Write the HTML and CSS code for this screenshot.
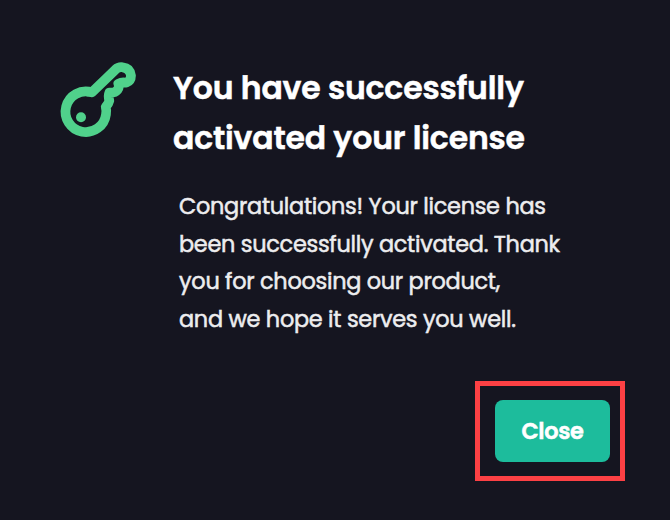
FILE: index.html
```html
<!DOCTYPE html>
<html lang="en">
<head>
<meta charset="utf-8">
<title>License activated</title>
<link rel="stylesheet" href="styles.css">
</head>
<body>
<main class="dialog">
  <svg class="key" viewBox="0 0 300 300" aria-hidden="true">
    <path d="M126 127A61 61 0 1 0 168 193Q170 180 167 171Q176 161 178 152Q174 137 178 128Q195 129 203 119Q209 110 205 101Q216 95 229 98Q243 92 243 77Q240 54 218 52Q206 50 196 59L126 127Q118 125 108 126"/>
    <circle cx="93" cy="202" r="15"/>
  </svg>
  <div class="content">
    <h1 class="title"><span class="line">You have successfully</span> <span class="line">activated your license</span></h1>
    <p class="message"><span class="line">Congratulations! Your license has</span> <span class="line">been successfully activated. Thank</span> <span class="line">you for choosing our product,</span> <span class="line">and we hope it serves you well.</span></p>
  </div>
  <div class="actions">
    <div class="highlight"><button class="close" type="button">Close</button></div>
  </div>
</main>
</body>
</html>
```
FILE: styles.css
```css
* { box-sizing: border-box; }
body {
  margin: 0;
  background: #151520;
  color: #fff;
  font-family: Poppins, Inter, "Open Sans", sans-serif;
}
.dialog {
  display: grid;
  grid-template-columns: 123px 1fr;
  grid-template-rows: 331px 100px;
  width: 670px;
  height: 520px;
  padding: 50px 45px 39px 50px;
}
.key {
  width: 100px;
  height: 100px;
  fill: none;
  stroke: #50d18b;
  stroke-width: 29;
  stroke-linejoin: round;
}
.key circle { fill: #50d18b; stroke: none; }
.content { padding-top: 13px; }
.line { display: block; width: max-content; }
.title {
  margin: 0;
  font-size: 31.5px;
  font-weight: 600;
  line-height: 50px;
  letter-spacing: -0.17px;
  -webkit-text-stroke: 0.5px #fff;
}
.message {
  margin: 25px 0 0 6px;
  color: #ededef;
  font-size: 22.4px;
  font-weight: 400;
  line-height: 37.5px;
  letter-spacing: -0.28px;
  -webkit-text-stroke: 0.5px #ededef;
}
.actions {
  grid-column: 1 / -1;
  display: flex;
  justify-content: flex-end;
}
.highlight {
  width: 150px;
  height: 100px;
  padding: 14px 10px 14px 15px;
  border: 5px solid #fc4044;
}
.close {
  display: block;
  width: 115px;
  height: 62px;
  padding: 0;
  border: 0;
  border-radius: 8px;
  background: #1dbc9c;
  color: #fff;
  font: inherit;
  font-size: 22.4px;
  font-weight: 600;
  letter-spacing: -0.3px;
  -webkit-text-stroke: 0.5px #fff;
}
```
